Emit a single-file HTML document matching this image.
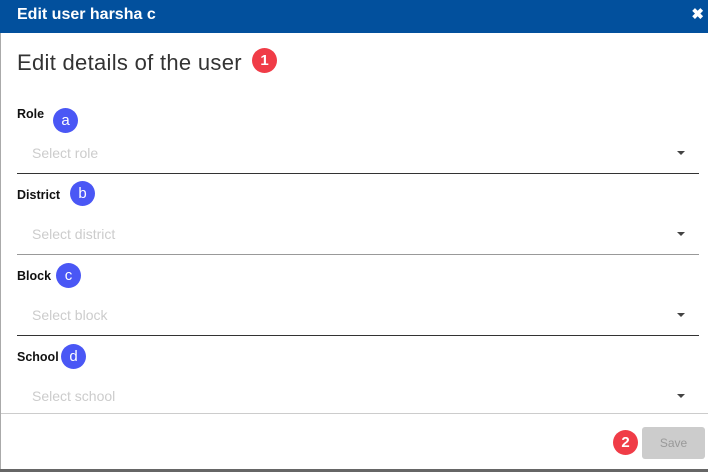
<!DOCTYPE html>
<html><head><style>
*{margin:0;padding:0;box-sizing:border-box}
body{width:708px;height:472px;background:#fff;font-family:"Liberation Sans",sans-serif;position:relative;overflow:hidden}
.hdr{position:absolute;left:0;top:0;width:708px;height:33px;background:#02509d;color:#fff;font-weight:bold;font-size:16px;padding:6px 0 0 17px}
.x{position:absolute;right:4px;top:5px;font-size:15px;font-weight:bold}
.lb{position:absolute;left:0;top:33px;width:1px;height:439px;background:#aaa}
.t{position:absolute;left:17px;top:50px;font-size:22px;color:#333;letter-spacing:0.3px}
.lab{position:absolute;left:17px;font-size:12.5px;color:#111;font-weight:bold}
.ph{position:absolute;left:32px;font-size:14px;color:#ccc}
.ln{position:absolute;left:17px;width:682px;height:1px;background:#333}
.ar{position:absolute;left:677px;width:0;height:0;border-left:4px solid transparent;border-right:4px solid transparent;border-top:4px solid #444}
.b{position:absolute;width:25px;height:25px;border-radius:50%;color:#fff;font-size:15px;text-align:center;line-height:25px}
.blue{background:#4a57f5}.red{background:#f03c47;font-weight:bold}
.save{position:absolute;left:642px;top:427px;width:63px;height:32px;background:#ccc;border-radius:3px;color:#999;font-size:12px;text-align:center;line-height:32px}
</style></head><body>
<div class="hdr">Edit user harsha c<span class="x">✖</span></div>
<div class="lb"></div>
<div class="t">Edit details of the user</div>
<div class="b red" style="left:252px;top:48px">1</div>
<div class="lab" style="top:107px">Role</div><div class="b blue" style="left:53px;top:108px">a</div>
<div class="ph" style="top:145px">Select role</div><div class="ar" style="top:151px"></div><div class="ln" style="top:173px"></div>
<div class="lab" style="top:188px">District</div><div class="b blue" style="left:70px;top:181px">b</div>
<div class="ph" style="top:226px">Select district</div><div class="ar" style="top:232px"></div><div class="ln" style="top:254px;background:#999"></div>
<div class="lab" style="top:269px">Block</div><div class="b blue" style="left:56px;top:263px">c</div>
<div class="ph" style="top:307px">Select block</div><div class="ar" style="top:313px"></div><div class="ln" style="top:335px"></div>
<div class="lab" style="top:350px">School</div><div class="b blue" style="left:61px;top:344px">d</div>
<div class="ph" style="top:388px">Select school</div><div class="ar" style="top:394px"></div><div class="ln" style="top:413px;left:1px;width:707px;background:#ccc"></div>
<div class="b red" style="left:613px;top:430px">2</div>
<div class="save">Save</div>
<div style="position:absolute;left:0;top:469px;width:708px;height:3px;background:#666"></div>
</body></html>
